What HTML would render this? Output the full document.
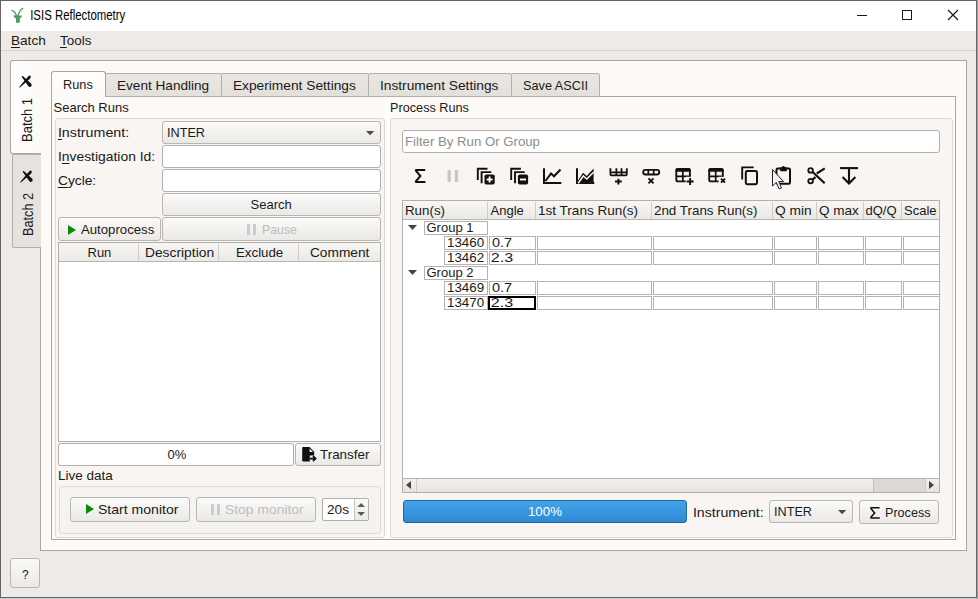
<!DOCTYPE html>
<html><head><meta charset="utf-8"><style>
html,body{margin:0;padding:0;}
body{width:978px;height:599px;position:relative;overflow:hidden;background:#c9c9c9;font-family:"Liberation Sans",sans-serif;}
div,svg{position:absolute;box-sizing:border-box;}
.t{white-space:pre;line-height:20px;}
u{text-decoration:underline;text-underline-offset:2px;}
</style></head><body>
<div style="left:0px;top:0px;width:978px;height:599px;background:#c9c9c9;"></div>
<div style="left:977px;top:0px;width:1px;height:599px;background:#8fa3b1;"></div>
<div style="left:0px;top:0px;width:977px;height:598px;background:#656565;"></div>
<div style="left:1px;top:1px;width:975px;height:596px;background:#eeebe7;"></div>
<div style="left:1px;top:1px;width:975px;height:30px;background:#ffffff;"></div>
<svg style="left:8px;top:4px;" width="22" height="22" viewBox="0 0 22 22"><g opacity="0.85"><path d="M4 6.4Q7.5 7.5 9.2 13.8M14.8 4.4Q10.5 6.5 10 13.8" fill="none" stroke="#2f8a45" stroke-width="1.3" stroke-linecap="round"/><path d="M5.2 11.6Q9.6 10.6 14 11.8Q13.4 13.8 11.8 14.6V18.6Q9.6 19.4 8 18.6V14.6Q5.8 13.8 5.2 11.6Z" fill="#2f8a45"/></g></svg>
<div class="t" style="left:29.5px;top:5px;font-size:14px;color:#000000;transform:scaleX(0.8147);transform-origin:1px 0;">ISIS Reflectometry</div>
<div style="left:857px;top:15px;width:10px;height:1px;background:#1a1a1a;"></div>
<div style="left:902px;top:10px;width:10px;height:10px;border:1px solid #1a1a1a;"></div>
<svg style="left:947px;top:9px;" width="12" height="12" viewBox="0 0 12 12"><path d="M1 1L11 11M11 1L1 11" stroke="#1a1a1a" stroke-width="1.2"/></svg>
<div style="left:1px;top:31px;width:975px;height:19px;background:#eeebe7;"></div>
<div style="left:1px;top:50px;width:975px;height:1px;background:#d6d2cd;"></div>
<div class="t" style="left:10.5px;top:31px;font-size:13px;color:#1a1a1a;transform:scaleX(1.0469);transform-origin:1px 0;"><u>B</u>atch</div>
<div class="t" style="left:60.0px;top:31px;font-size:13px;color:#1a1a1a;transform:scaleX(1.0333);transform-origin:0px 0;"><u>T</u>ools</div>
<div style="left:40px;top:60px;width:927px;height:491px;background:#fcf9f6;border:1px solid #aaa6a2;"></div>
<div style="left:12px;top:154px;width:29px;height:94px;background:#e6e3df;border:1px solid #b3afab;border-radius:2px 0 0 2px;border-right:none;"></div>
<div style="left:10px;top:60px;width:31px;height:94px;background:linear-gradient(90deg,#fefefe,#fcf9f6);border:1px solid #aaa6a2;border-radius:3px 0 0 3px;border-right:none;"></div>
<div style="left:40px;top:61px;width:1px;height:92px;background:#fcf9f6;"></div>
<svg style="left:16px;top:72px;" width="20" height="20" viewBox="0 0 20 20"><path d="M5.6 4.7Q6 3.8 6.8 4.1L15 11.4Q16.6 13.2 15 14.6Q13.6 15.6 12.2 14Z" fill="#111"/><path d="M14.8 4.6Q14.2 3 12.6 3.9Q11.6 4.6 10.6 6.2L3.2 15.1Q3.3 15.6 3.9 15.4L13.2 7.6Q15.2 6.2 14.8 4.6Z" fill="#111"/></svg>
<svg style="left:16.5px;top:166.5px;" width="20" height="20" viewBox="0 0 20 20"><path d="M5.6 4.7Q6 3.8 6.8 4.1L15 11.4Q16.6 13.2 15 14.6Q13.6 15.6 12.2 14Z" fill="#111"/><path d="M14.8 4.6Q14.2 3 12.6 3.9Q11.6 4.6 10.6 6.2L3.2 15.1Q3.3 15.6 3.9 15.4L13.2 7.6Q15.2 6.2 14.8 4.6Z" fill="#111"/></svg>
<div class="t" style="left:17px;top:141.5px;font-size:14px;color:#1a1a1a;transform-origin:0 0;transform:rotate(-90deg) scaleX(0.9271);">Batch 1</div>
<div class="t" style="left:17.8px;top:235.5px;font-size:14px;color:#1a1a1a;transform-origin:0 0;transform:rotate(-90deg) scaleX(0.9062);">Batch 2</div>
<div style="left:51px;top:96px;width:905px;height:444px;background:#fcf9f6;border:1px solid #aaa6a2;"></div>
<div style="left:105px;top:73px;width:117px;height:24px;background:linear-gradient(#eae7e3,#e3e0dc);border:1px solid #b3afab;border-radius:2px 2px 0 0;"></div>
<div style="left:221px;top:73px;width:148px;height:24px;background:linear-gradient(#eae7e3,#e3e0dc);border:1px solid #b3afab;border-radius:2px 2px 0 0;"></div>
<div style="left:368px;top:73px;width:144px;height:24px;background:linear-gradient(#eae7e3,#e3e0dc);border:1px solid #b3afab;border-radius:2px 2px 0 0;"></div>
<div style="left:511px;top:73px;width:89px;height:24px;background:linear-gradient(#eae7e3,#e3e0dc);border:1px solid #b3afab;border-radius:2px 2px 0 0;"></div>
<div style="left:51px;top:71px;width:55px;height:26px;background:linear-gradient(#fefefe,#fcf9f6);border:1px solid #aaa6a2;border-radius:3px 3px 0 0;border-bottom:none;"></div>
<div class="t" style="left:63.0px;top:75px;font-size:13px;color:#1a1a1a;transform:scaleX(0.9828);transform-origin:1px 0;">Runs</div>
<div class="t" style="left:117.0px;top:76px;font-size:13px;color:#1a1a1a;transform:scaleX(1.0460);transform-origin:1px 0;">Event Handling</div>
<div class="t" style="left:233.0px;top:76px;font-size:13px;color:#1a1a1a;transform:scaleX(1.0565);transform-origin:1px 0;">Experiment Settings</div>
<div class="t" style="left:380.0px;top:76px;font-size:13px;color:#1a1a1a;transform:scaleX(1.0586);transform-origin:1px 0;">Instrument Settings</div>
<div class="t" style="left:523.0px;top:76px;font-size:13px;color:#1a1a1a;transform:scaleX(0.9766);transform-origin:1px 0;">Save ASCII</div>
<div class="t" style="left:53.5px;top:98px;font-size:13px;color:#1a1a1a;">Search Runs</div>
<div style="left:55px;top:118px;width:330px;height:420px;background:#f8f5f2;border:1px solid #dedad6;border-radius:3px;"></div>
<div class="t" style="left:57.5px;top:123px;font-size:13px;color:#1a1a1a;transform:scaleX(1.0952);transform-origin:1px 0;"><u>I</u>nstrument:</div>
<div class="t" style="left:57.5px;top:147px;font-size:13px;color:#1a1a1a;transform:scaleX(1.0674);transform-origin:1px 0;">I<u>n</u>vestigation Id:</div>
<div class="t" style="left:57.5px;top:171px;font-size:13px;color:#1a1a1a;transform:scaleX(1.0588);transform-origin:1px 0;"><u>C</u>ycle:</div>
<div style="left:162px;top:121px;width:219px;height:23px;background:linear-gradient(#fafafa,#ebe9e6);border:1px solid #b9b5b1;border-radius:3px;"></div>
<div class="t" style="left:166.5px;top:123px;font-size:13px;color:#1a1a1a;transform:scaleX(0.9730);transform-origin:1px 0;">INTER</div>
<svg style="left:366px;top:131px;" width="9" height="5" viewBox="0 0 9 5"><path d="M0 0H8.2L4.1 4.2Z" fill="#4a4a4a"/></svg>
<div style="left:162px;top:145px;width:219px;height:23px;background:#ffffff;border:1px solid #b3afab;border-radius:3px;"></div>
<div style="left:162px;top:169px;width:219px;height:23px;background:#ffffff;border:1px solid #b3afab;border-radius:3px;"></div>
<div style="left:162px;top:193px;width:219px;height:23px;background:linear-gradient(#fafafa,#ebe9e6);border:1px solid #b9b5b1;border-radius:3px;"></div>
<div class="t" style="left:250.5px;top:195px;font-size:13px;color:#1a1a1a;">Search</div>
<div style="left:58px;top:217px;width:103px;height:24px;background:linear-gradient(#fafafa,#ebe9e6);border:1px solid #b9b5b1;border-radius:3px;"></div>
<svg style="left:68px;top:225px;" width="8" height="10" viewBox="0 0 8 10"><path d="M0 0L8 5L0 10Z" fill="#0a8a0a"/></svg>
<div class="t" style="left:80.5px;top:220px;font-size:13px;color:#1a1a1a;transform:scaleX(1.0139);transform-origin:0px 0;">Autoprocess</div>
<div style="left:162px;top:217px;width:219px;height:24px;background:linear-gradient(#fafafa,#ebe9e6);border:1px solid #b9b5b1;border-radius:3px;"></div>
<div style="left:247px;top:224px;width:3px;height:11px;background:#cdcdcd;"></div>
<div style="left:253px;top:224px;width:3px;height:11px;background:#cdcdcd;"></div>
<div class="t" style="left:261.5px;top:220px;font-size:13px;color:#bebcba;transform:scaleX(0.9444);transform-origin:1px 0;">Pause</div>
<div style="left:58px;top:242px;width:323px;height:200px;background:#ffffff;border:1px solid #b3afab;"></div>
<div style="left:59px;top:243px;width:321px;height:18px;background:linear-gradient(#f7f6f4,#ebe9e6);"></div>
<div style="left:59px;top:261px;width:321px;height:1px;background:#b8b4b0;"></div>
<div style="left:138px;top:244px;width:1px;height:17px;background:#cfcbc7;"></div>
<div style="left:218px;top:244px;width:1px;height:17px;background:#cfcbc7;"></div>
<div style="left:298px;top:244px;width:1px;height:17px;background:#cfcbc7;"></div>
<div class="t" style="left:87.5px;top:243px;font-size:13px;color:#1a1a1a;">Run</div>
<div class="t" style="left:144.5px;top:243px;font-size:13px;color:#1a1a1a;transform:scaleX(1.0635);transform-origin:1px 0;">Description</div>
<div class="t" style="left:235.5px;top:243px;font-size:13px;color:#1a1a1a;transform:scaleX(1.0222);transform-origin:1px 0;">Exclude</div>
<div class="t" style="left:309.5px;top:243px;font-size:13px;color:#1a1a1a;transform:scaleX(1.0545);transform-origin:1px 0;">Comment</div>
<div style="left:58px;top:443px;width:236px;height:23px;background:#ffffff;border:1px solid #b3afab;border-radius:3px;"></div>
<div class="t" style="left:167.5px;top:445px;font-size:13px;color:#1a1a1a;">0%</div>
<div style="left:295px;top:443px;width:86px;height:23px;background:linear-gradient(#fafafa,#ebe9e6);border:1px solid #b9b5b1;border-radius:3px;"></div>
<svg style="left:300px;top:445px;" width="18" height="18" viewBox="0 0 18 18"><path d="M3 2H9.5L14.2 6.8V10.5H9.8V16.6H3Q2.2 16.6 2.2 15.8V2.8Q2.2 2 3 2Z" fill="#111"/><path d="M9.6 3.6V7H13Z" fill="#f4f3f1"/><path d="M9.8 13.6H15.2M13 11.2L15.6 13.6L13 16" fill="none" stroke="#111" stroke-width="1.8"/></svg>
<div class="t" style="left:320.0px;top:445px;font-size:13px;color:#1a1a1a;transform:scaleX(1.0312);transform-origin:0px 0;">Transfer</div>
<div class="t" style="left:57.5px;top:466px;font-size:13px;color:#1a1a1a;transform:scaleX(1.0385);transform-origin:1px 0;">Live data</div>
<div style="left:59px;top:486px;width:322px;height:48px;background:#f5f3f0;border:1px solid #dedad6;border-radius:3px;"></div>
<div style="left:70px;top:497px;width:120px;height:25px;background:linear-gradient(#fafafa,#ebe9e6);border:1px solid #b9b5b1;border-radius:3px;"></div>
<svg style="left:86px;top:504px;" width="8" height="10" viewBox="0 0 8 10"><path d="M0 0L8 5L0 10Z" fill="#0a8a0a"/></svg>
<div class="t" style="left:97.5px;top:500px;font-size:13px;color:#1a1a1a;transform:scaleX(1.0822);transform-origin:1px 0;">Start monitor</div>
<div style="left:196px;top:497px;width:120px;height:25px;background:linear-gradient(#fafafa,#ebe9e6);border:1px solid #b9b5b1;border-radius:3px;"></div>
<div style="left:211px;top:504px;width:3px;height:11px;background:#cdcdcd;"></div>
<div style="left:217px;top:504px;width:3px;height:11px;background:#cdcdcd;"></div>
<div class="t" style="left:224.5px;top:500px;font-size:13px;color:#bebcba;transform:scaleX(1.0685);transform-origin:1px 0;">Stop monitor</div>
<div style="left:322px;top:498px;width:47px;height:23px;background:#ffffff;border:1px solid #b3afab;border-radius:2px;"></div>
<div style="left:354px;top:499px;width:14px;height:21px;background:linear-gradient(#fafafa,#ebe9e6);border-left:1px solid #c8c4c0;"></div>
<svg style="left:357px;top:501px;" width="9" height="17" viewBox="0 0 9 17"><path d="M0.2 6H8L4.1 2Z M0.2 11H8L4.1 15Z" fill="#5a5a5a"/></svg>
<div class="t" style="left:326.5px;top:500px;font-size:13px;color:#1a1a1a;transform:scaleX(1.0500);transform-origin:1px 0;">20s</div>
<div style="left:385px;top:99px;width:5px;height:439px;background:#ffffff;"></div>
<div class="t" style="left:389.5px;top:98px;font-size:13px;color:#1a1a1a;transform:scaleX(0.9750);transform-origin:1px 0;">Process Runs</div>
<div style="left:390px;top:118px;width:563px;height:420px;background:#f8f5f2;border:1px solid #dedad6;border-radius:3px;"></div>
<div style="left:402px;top:130px;width:538px;height:23px;background:#ffffff;border:1px solid #b3afab;border-radius:3px;"></div>
<div class="t" style="left:404.5px;top:132px;font-size:13px;color:#8e8d8c;transform:scaleX(1.0152);transform-origin:1px 0;">Filter By Run Or Group</div>
<svg style="left:400px;top:160px" width="470" height="35" viewBox="400 160 470 35"><path d="M415.2 169.9H425.2M415.2 182.1H425.4M415.4 170.2L420.4 176L415.4 181.8" fill="none" stroke="#111" stroke-width="2.0" stroke-linejoin="miter"/><rect x="447.5" y="170" width="3.3" height="12" fill="#c8c8c8"/><rect x="454.8" y="170" width="3.3" height="12" fill="#c8c8c8"/><path d="M477.8 180V168.8H487.5" fill="none" stroke="#111" stroke-width="1.9"/><path d="M481.6 183.2V172.1H491.3" fill="none" stroke="#111" stroke-width="1.9"/><rect x="484.5" y="174.4" width="10.2" height="10.2" rx="1.8" fill="#111"/><path d="M486.6 179.5H492.6" stroke="#fff" stroke-width="1.9"/><path d="M489.6 176.5V182.5" stroke="#fff" stroke-width="1.9"/><path d="M511.2 180V168.8H520.9" fill="none" stroke="#111" stroke-width="1.9"/><path d="M515.0 183.2V172.1H524.6999999999999" fill="none" stroke="#111" stroke-width="1.9"/><rect x="517.9" y="174.4" width="10.2" height="10.2" rx="1.8" fill="#111"/><path d="M520.0 179.5H526.0" stroke="#fff" stroke-width="1.9"/><path d="M544 168.3V183.1H561.3" fill="none" stroke="#111" stroke-width="2.0"/><path d="M545.5 181L551 173.5L554 176.3L560.5 169.5" fill="none" stroke="#111" stroke-width="2.0"/><path d="M577 168.3V183.1H594.3" fill="none" stroke="#111" stroke-width="2.0"/><path d="M578 180.5L583 172.8L586.7 176L593.6 168.6V183H578Z" fill="#111"/><path d="M578.2 183.3L583.3 176L586.8 179L593.8 172" fill="none" stroke="#f8f5f2" stroke-width="1.6"/><path d="M610.4 168.2V174.2Q610.4 175.3 611.5 175.3H625.7Q626.8 175.3 626.8 174.2V168.2M610.4 172.3H626.8M616.4 168.2V175M621.5 168.2V175" fill="none" stroke="#111" stroke-width="1.8"/><path d="M618.4 178.8V184.5M615 181.6H621.8" stroke="#111" stroke-width="2.0"/><rect x="643.2" y="169.9" width="16" height="4.6" rx="2.2" fill="none" stroke="#111" stroke-width="1.9"/><path d="M648.3 170V174.4M653.7 170V174.4" stroke="#111" stroke-width="1.7"/><path d="M648.5 178.3L653.5 183.3M653.5 178.3L648.5 183.3" stroke="#111" stroke-width="1.9"/><rect x="676.3" y="169" width="13.6" height="12.4" rx="1.6" fill="none" stroke="#111" stroke-width="1.9"/><rect x="675.5" y="168.2" width="15.2" height="3.6" rx="1.6" fill="#111"/><path d="M676.3 176.3H689.9M682.8 171V181.4" stroke="#111" stroke-width="1.7"/><rect x="685.7" y="176.8" width="9" height="9" fill="#f8f5f2"/><path d="M690.1 178V185M686.6 181.5H693.6" stroke="#111" stroke-width="1.9"/><rect x="709.1999999999999" y="169" width="13.6" height="12.4" rx="1.6" fill="none" stroke="#111" stroke-width="1.9"/><rect x="708.4" y="168.2" width="15.2" height="3.6" rx="1.6" fill="#111"/><path d="M709.1999999999999 176.3H722.8M715.6999999999999 171V181.4" stroke="#111" stroke-width="1.7"/><rect x="718.6" y="176.8" width="9" height="9" fill="#f8f5f2"/><path d="M721.0 178.6L725.0 182.6M725.0 178.6L721.0 182.6" stroke="#111" stroke-width="1.9"/><path d="M742.2 179.4V167.4H753.7" fill="none" stroke="#111" stroke-width="1.9"/><rect x="745.8" y="171" width="11.2" height="13.2" rx="1.4" fill="none" stroke="#111" stroke-width="2.0"/><rect x="776.5" y="168.6" width="13.5" height="15.1" rx="1.2" fill="none" stroke="#111" stroke-width="2.0"/><path d="M780.8 167.8H786.2V170.6H780.8Z" fill="#111" stroke="#111" stroke-width="1.2"/><circle cx="783.5" cy="167.2" r="1.3" fill="#111"/><circle cx="810.6" cy="170.4" r="2.3" fill="none" stroke="#111" stroke-width="1.8"/><circle cx="810.6" cy="181.1" r="2.3" fill="none" stroke="#111" stroke-width="1.8"/><path d="M812.6 172L824.7 183.3M816.8 173.5L824.7 168.4M812.4 179.6L815.6 177.2" stroke="#111" stroke-width="2.2"/><path d="M840.1 168.1H858" stroke="#111" stroke-width="2.1"/><path d="M849 169V183.5M842.6 177.1L849 183.5L855.4 177.1" fill="none" stroke="#111" stroke-width="2.1"/><path d="M772.5 169.5V186L776.3 182.5L779.2 189L781.5 188L778.8 181.6H783.5Z" fill="#f4f4f4" stroke="#222" stroke-width="1.0" stroke-linejoin="round"/></svg>
<div style="left:402px;top:200px;width:538px;height:293px;background:#ffffff;border:1px solid #b3afab;"></div>
<div style="left:403px;top:201px;width:536px;height:18px;background:linear-gradient(#f7f6f4,#ebe9e6);"></div>
<div style="left:403px;top:219px;width:536px;height:1px;background:#b8b4b0;"></div>
<div style="left:487px;top:202px;width:1px;height:17px;background:#cfcbc7;"></div>
<div style="left:535px;top:202px;width:1px;height:17px;background:#cfcbc7;"></div>
<div style="left:651px;top:202px;width:1px;height:17px;background:#cfcbc7;"></div>
<div style="left:772px;top:202px;width:1px;height:17px;background:#cfcbc7;"></div>
<div style="left:816px;top:202px;width:1px;height:17px;background:#cfcbc7;"></div>
<div style="left:863px;top:202px;width:1px;height:17px;background:#cfcbc7;"></div>
<div style="left:901px;top:202px;width:1px;height:17px;background:#cfcbc7;"></div>
<div class="t" style="left:404.5px;top:201px;font-size:13px;color:#1a1a1a;transform:scaleX(1.0270);transform-origin:1px 0;">Run(s)</div>
<div class="t" style="left:490.5px;top:201px;font-size:13px;color:#1a1a1a;">Angle</div>
<div class="t" style="left:537.5px;top:201px;font-size:13px;color:#1a1a1a;transform:scaleX(1.0426);transform-origin:1px 0;">1st Trans Run(s)</div>
<div class="t" style="left:653.5px;top:201px;font-size:13px;color:#1a1a1a;transform:scaleX(1.0303);transform-origin:1px 0;">2nd Trans Run(s)</div>
<div class="t" style="left:774.5px;top:201px;font-size:13px;color:#1a1a1a;transform:scaleX(1.0606);transform-origin:1px 0;">Q min</div>
<div class="t" style="left:818.5px;top:201px;font-size:13px;color:#1a1a1a;transform:scaleX(1.0405);transform-origin:1px 0;">Q max</div>
<div class="t" style="left:865.5px;top:201px;font-size:13px;color:#1a1a1a;">dQ/Q</div>
<div class="t" style="left:904.0px;top:201px;font-size:13px;color:#1a1a1a;">Scale</div>
<svg style="left:408px;top:225px;" width="9" height="5" viewBox="0 0 9 5"><path d="M0 0H9L4.5 5Z" fill="#444"/></svg>
<div style="left:424px;top:221px;width:64px;height:14px;border:1px solid #b3b3b3;"></div>
<div class="t" style="left:426.5px;top:218px;font-size:13px;color:#1a1a1a;">Group 1</div>
<div style="left:444px;top:236px;width:44px;height:14px;border:1px solid #b3b3b3;"></div>
<div class="t" style="left:446.5px;top:233px;font-size:13px;color:#1a1a1a;transform:scaleX(1.0286);transform-origin:1px 0;">13460</div>
<div style="left:489px;top:236px;width:47px;height:14px;border:1px solid #b3b3b3;"></div>
<div class="t" style="left:491.5px;top:233px;font-size:13px;color:#1a1a1a;transform:scaleX(1.1111);transform-origin:0px 0;">0.7</div>
<div style="left:537px;top:236px;width:115px;height:14px;border:1px solid #b3b3b3;"></div>
<div style="left:653px;top:236px;width:120px;height:14px;border:1px solid #b3b3b3;"></div>
<div style="left:774px;top:236px;width:43px;height:14px;border:1px solid #b3b3b3;"></div>
<div style="left:818px;top:236px;width:46px;height:14px;border:1px solid #b3b3b3;"></div>
<div style="left:865px;top:236px;width:37px;height:14px;border:1px solid #b3b3b3;"></div>
<div style="left:903px;top:236px;width:37px;height:14px;border:1px solid #b3b3b3;"></div>
<div style="left:444px;top:251px;width:44px;height:14px;border:1px solid #b3b3b3;"></div>
<div class="t" style="left:446.5px;top:248px;font-size:13px;color:#1a1a1a;transform:scaleX(1.0286);transform-origin:1px 0;">13462</div>
<div style="left:489px;top:251px;width:47px;height:14px;border:1px solid #b3b3b3;"></div>
<div class="t" style="left:490.5px;top:248px;font-size:13px;color:#1a1a1a;transform:scaleX(1.2353);transform-origin:1px 0;">2.3</div>
<div style="left:537px;top:251px;width:115px;height:14px;border:1px solid #b3b3b3;"></div>
<div style="left:653px;top:251px;width:120px;height:14px;border:1px solid #b3b3b3;"></div>
<div style="left:774px;top:251px;width:43px;height:14px;border:1px solid #b3b3b3;"></div>
<div style="left:818px;top:251px;width:46px;height:14px;border:1px solid #b3b3b3;"></div>
<div style="left:865px;top:251px;width:37px;height:14px;border:1px solid #b3b3b3;"></div>
<div style="left:903px;top:251px;width:37px;height:14px;border:1px solid #b3b3b3;"></div>
<svg style="left:408px;top:270px;" width="9" height="5" viewBox="0 0 9 5"><path d="M0 0H9L4.5 5Z" fill="#444"/></svg>
<div style="left:424px;top:266px;width:64px;height:14px;border:1px solid #b3b3b3;"></div>
<div class="t" style="left:426.5px;top:263px;font-size:13px;color:#1a1a1a;">Group 2</div>
<div style="left:444px;top:281px;width:44px;height:14px;border:1px solid #b3b3b3;"></div>
<div class="t" style="left:446.5px;top:278px;font-size:13px;color:#1a1a1a;transform:scaleX(1.0286);transform-origin:1px 0;">13469</div>
<div style="left:489px;top:281px;width:47px;height:14px;border:1px solid #b3b3b3;"></div>
<div class="t" style="left:491.5px;top:278px;font-size:13px;color:#1a1a1a;transform:scaleX(1.1111);transform-origin:0px 0;">0.7</div>
<div style="left:537px;top:281px;width:115px;height:14px;border:1px solid #b3b3b3;"></div>
<div style="left:653px;top:281px;width:120px;height:14px;border:1px solid #b3b3b3;"></div>
<div style="left:774px;top:281px;width:43px;height:14px;border:1px solid #b3b3b3;"></div>
<div style="left:818px;top:281px;width:46px;height:14px;border:1px solid #b3b3b3;"></div>
<div style="left:865px;top:281px;width:37px;height:14px;border:1px solid #b3b3b3;"></div>
<div style="left:903px;top:281px;width:37px;height:14px;border:1px solid #b3b3b3;"></div>
<div style="left:444px;top:296px;width:44px;height:14px;border:1px solid #b3b3b3;"></div>
<div class="t" style="left:446.5px;top:293px;font-size:13px;color:#1a1a1a;transform:scaleX(1.0286);transform-origin:1px 0;">13470</div>
<div style="left:489px;top:296px;width:47px;height:14px;border:1px solid #b3b3b3;"></div>
<div class="t" style="left:490.5px;top:293px;font-size:13px;color:#1a1a1a;transform:scaleX(1.2353);transform-origin:1px 0;">2.3</div>
<div style="left:537px;top:296px;width:115px;height:14px;border:1px solid #b3b3b3;"></div>
<div style="left:653px;top:296px;width:120px;height:14px;border:1px solid #b3b3b3;"></div>
<div style="left:774px;top:296px;width:43px;height:14px;border:1px solid #b3b3b3;"></div>
<div style="left:818px;top:296px;width:46px;height:14px;border:1px solid #b3b3b3;"></div>
<div style="left:865px;top:296px;width:37px;height:14px;border:1px solid #b3b3b3;"></div>
<div style="left:903px;top:296px;width:37px;height:14px;border:1px solid #b3b3b3;"></div>

<div style="left:488px;top:296px;width:48px;height:14px;border:2px solid #000;"></div>
<div style="left:403px;top:478px;width:536px;height:1px;background:#b8b4b0;"></div>
<div style="left:403px;top:479px;width:536px;height:13px;background:linear-gradient(#f2f0ed,#e6e3df);"></div>
<div style="left:416px;top:479px;width:1px;height:13px;background:#cfcbc7;"></div>
<svg style="left:406px;top:481px;" width="5" height="8" viewBox="0 0 5 8"><path d="M5 0V8L0 4Z" fill="#444"/></svg>
<div style="left:873px;top:479px;width:53px;height:13px;background:#dcd9d5;border-left:1px solid #c4c0bc;"></div>
<div style="left:925px;top:479px;width:1px;height:13px;background:#cfcbc7;"></div>
<svg style="left:929px;top:481px;" width="5" height="8" viewBox="0 0 5 8"><path d="M0 0V8L5 4Z" fill="#444"/></svg>
<div style="left:403px;top:500px;width:284px;height:23px;background:linear-gradient(#41a3ea,#2f8ad3);border:1px solid #24679e;border-radius:3px;"></div>
<div class="t" style="left:528.0px;top:502px;font-size:13px;color:#ffffff;transform:scaleX(1.0219);transform-origin:1px 0;">100%</div>
<div class="t" style="left:692.5px;top:503px;font-size:13px;color:#1a1a1a;transform:scaleX(1.0873);transform-origin:1px 0;">Instrument:</div>
<div style="left:769px;top:500px;width:84px;height:23px;background:linear-gradient(#fafafa,#ebe9e6);border:1px solid #b9b5b1;border-radius:3px;"></div>
<div class="t" style="left:774.0px;top:502px;font-size:13px;color:#1a1a1a;transform:scaleX(0.9730);transform-origin:1px 0;">INTER</div>
<svg style="left:837.5px;top:510px;" width="9" height="5" viewBox="0 0 9 5"><path d="M0 0H8.2L4.1 4.2Z" fill="#4a4a4a"/></svg>
<div style="left:859px;top:500px;width:80px;height:24px;background:linear-gradient(#fafafa,#ebe9e6);border:1px solid #b9b5b1;border-radius:3px;"></div>
<svg style="left:868px;top:505px;" width="13" height="15" viewBox="0 0 13 15"><path d="M2.3 2.8H11.6M2.3 13H11.8M2.5 3.1L6.6 8L2.5 12.8" fill="none" stroke="#111" stroke-width="1.6"/></svg>
<div class="t" style="left:884.5px;top:503px;font-size:13px;color:#1a1a1a;transform:scaleX(0.9674);transform-origin:1px 0;">Process</div>
<div style="left:10px;top:558px;width:30px;height:30px;background:linear-gradient(#fafafa,#ebe9e6);border:1px solid #b9b5b1;border-radius:3px;"></div>
<div class="t" style="left:21.5px;top:565px;font-size:13px;color:#1a1a1a;transform:scaleX(0.9167);transform-origin:1px 0;">?</div>
</body></html>
